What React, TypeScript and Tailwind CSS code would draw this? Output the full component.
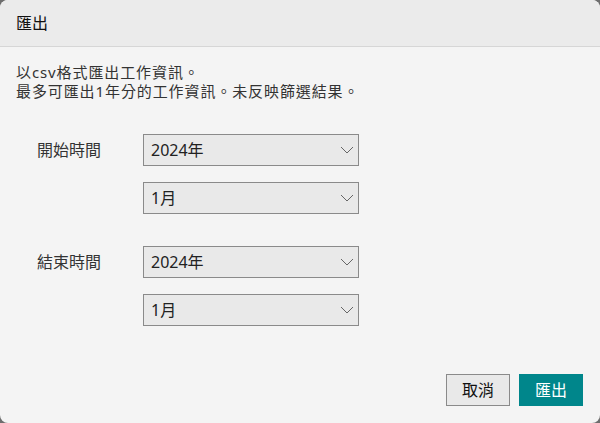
const Chevron = () => (
  <svg width="14" height="8" viewBox="0 0 14 8" className="shrink-0">
    <path d="M1 1l6 6 6-6" fill="none" stroke="#666" strokeWidth="1" />
  </svg>
);

const Select = ({ value }: { value: string }) => (
  <div className="flex h-[32px] w-[216px] items-center justify-between border border-[#8a8a8a] bg-[#e9e9e9] pl-[7px] pr-[4px] text-[16px] text-[#222]">
    <span>{value}</span>
    <Chevron />
  </div>
);

const Row = ({ label }: { label: string }) => (
  <div className="flex flex-col gap-[16px]">
    <div className="flex items-center">
      <div className="w-[143px] pl-[37px] text-[16px] text-[#333]">{label}</div>
      <Select value="2024年" />
    </div>
    <div className="pl-[143px]">
      <Select value="1月" />
    </div>
  </div>
);

const App = () => {
  return (
    <div
      className="h-[423px] w-[600px] bg-[#6e6e6e]"
      style={{ fontFamily: '"Noto Sans", "Noto Sans CJK TC", sans-serif' }}
    >
      <div className="flex h-full flex-col overflow-hidden rounded-[8px] bg-[#f4f4f4]">
        {/* Header */}
        <div className="flex h-[47px] items-center border-b border-[#d6d6d6] bg-[#ebebeb] px-[16px] text-[16px] text-[#111]">
          匯出
        </div>

        {/* Body */}
        <div className="px-[16px] pt-[16px] text-[15px] leading-[19px] tracking-[0.9px] text-[#333]">
          <p>以csv格式匯出工作資訊。</p>
          <p>最多可匯出1年分的工作資訊。未反映篩選結果。</p>
        </div>

        <div className="mt-[33px] flex flex-col gap-[32px]">
          <Row label="開始時間" />
          <Row label="結束時間" />
        </div>

        {/* Footer */}
        <div className="mt-auto flex justify-end gap-[9px] pb-[17px] pr-[17px]">
          <button className="h-[32px] w-[64px] border border-[#8a8a8a] bg-[#e9e9e9] text-[16px] text-[#111]">
            取消
          </button>
          <button className="h-[32px] w-[64px] bg-[#00868b] text-[16px] text-white">
            匯出
          </button>
        </div>
      </div>
    </div>
  );
};

export default App;
